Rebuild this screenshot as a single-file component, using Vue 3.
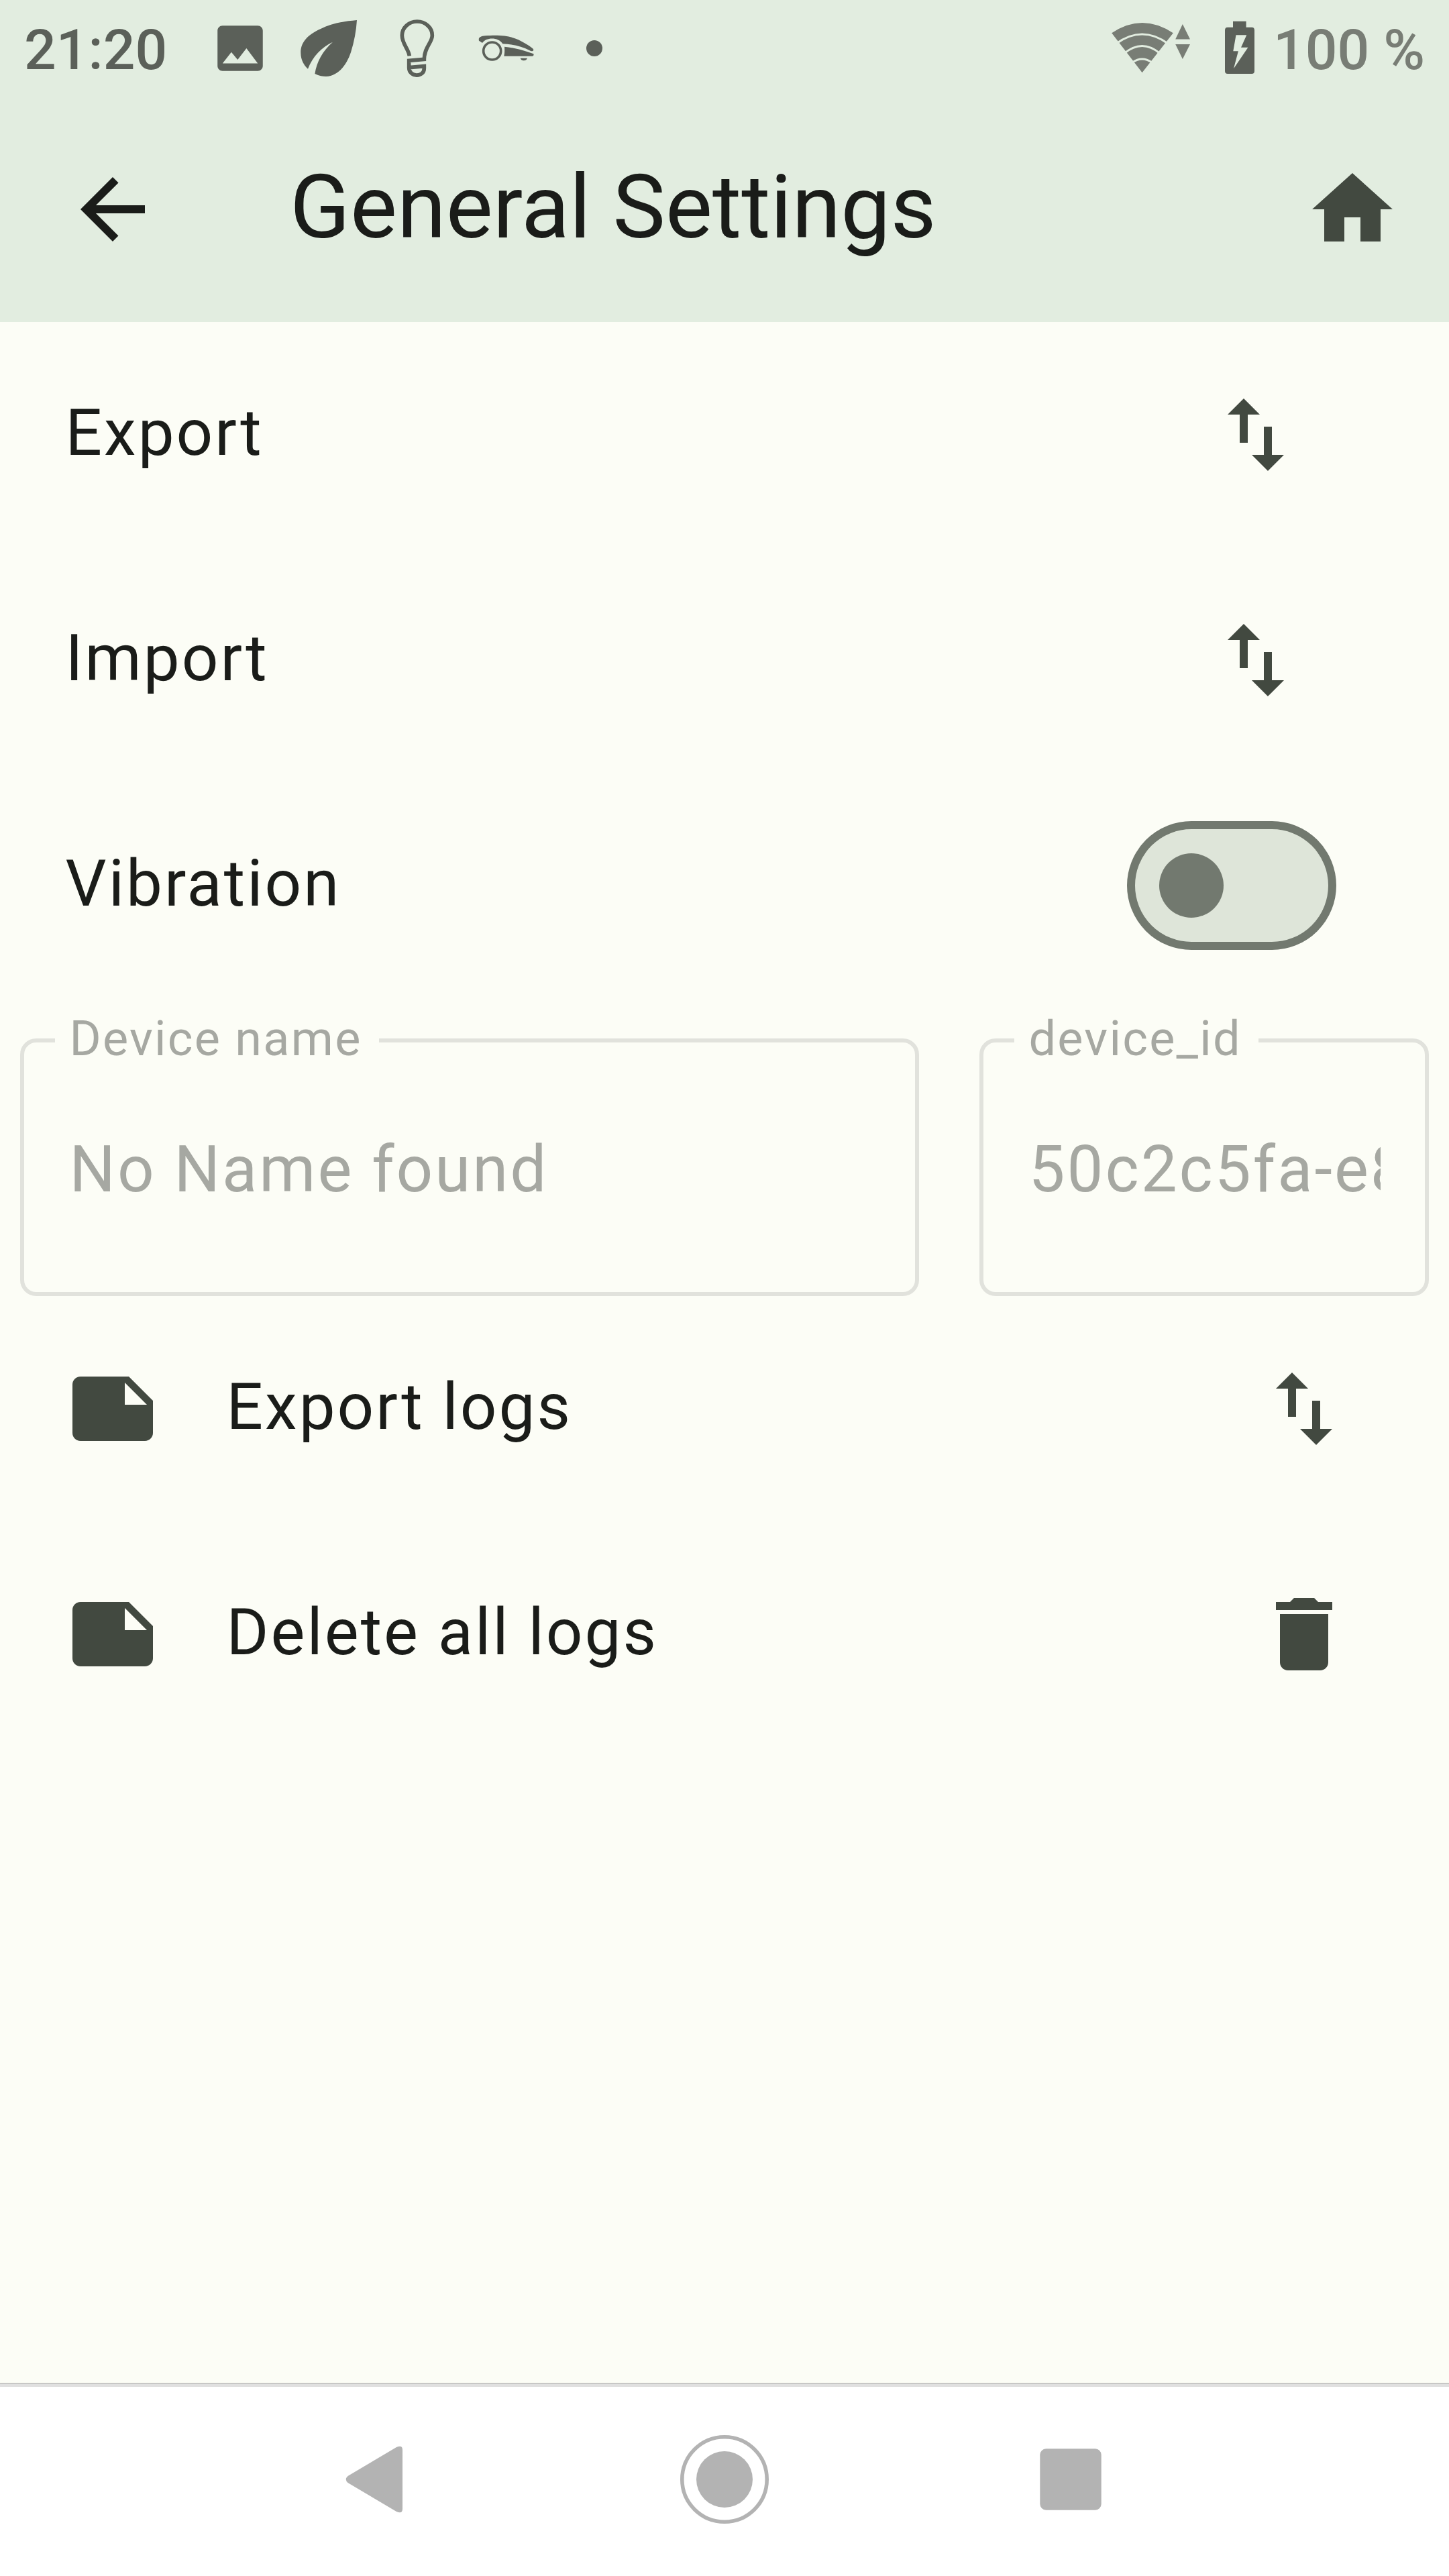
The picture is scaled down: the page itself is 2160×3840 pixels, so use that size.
<script setup>
const icons = {
  swap: 'M9 3L5 6.99h3V14h2V6.99h3L9 3zm7 14.01V10h-2v7.01h-3L15 21l4-3.99h-3z',
  note: 'M22 10l-6-6H4c-1.1 0-2 .9-2 2v12.01c0 1.1.9 1.99 2 1.99l16-.01c1.1 0 2-.89 2-1.99v-8zm-7-4.5l5.5 5.5H15V5.5z',
  trash: 'M6 19c0 1.1.9 2 2 2h8c1.1 0 2-.9 2-2V7H6v12zM19 4h-3.5l-1-1h-5l-1 1H5v2h14V4z',
}
const transfers = ['Export', 'Import']
const logs = [
  { title: 'Export logs', icon: icons.swap },
  { title: 'Delete all logs', icon: icons.trash },
]
const fields = [
  { label: 'Device name', value: 'No Name found', size: 'wide' },
  { label: 'device_id', value: '50c2c5fa-e8', size: 'narrow' },
]
</script>

<template>
  <div class="screen">
    <div class="status">
      <span class="clock">21:20</span>
      <svg class="s-image" viewBox="0 0 24 24"><path d="M21 19V5c0-1.1-.9-2-2-2H5c-1.1 0-2 .9-2 2v14c0 1.1.9 2 2 2h14c1.1 0 2-.9 2-2zM8.5 13.5l2.5 3.01L14.5 12l4.5 6H5l3.5-4.5z" /></svg>
      <svg class="s-leaf" viewBox="448 28 84 88"><path d="M532 30C510 32 494 35 478 43C456 53 448 65 448.3 79C448.5 90 453 97 459 102.7C466 84 480 70 496 62.7C481 76 472 92 469.4 110C476 113 481 114 486 114C505 113 517 96 523 78C528 62 531 46 532 30Z" /></svg>
      <svg class="s-bulb" viewBox="220 81 171 270"><path d="M272 250C268 218 239 196 239 158A67.5 62 0 0 1 374 158C374 190 338 212 338 265L270 271V303C270 346 338 348 338 305V296L272 302" /></svg>
      <svg class="s-vacuum" viewBox="576 150 255 132">
        <path d="M582 182C578 167 590 162 610 160C700 154 740 165 790 195C815 210 826 218 826 223C825 230 820 230 812 227C770 205 730 198 688 196C670 166 615 165 597 192Z" />
        <path d="M696 209C750 215 790 228 826 241C828 247 825 251 820 251H694C697 235 697 225 696 209ZM767 260H798C794 274 771 274 767 260Z" />
        <circle cx="641" cy="228" r="39" />
      </svg>
      <span class="s-dot"></span>
      <span class="spring"></span>
      <svg class="s-wifi" viewBox="36 28 120 88">
        <path d="M37.2 49.3Q82.6 18.7 128.8 49.3L82.6 108.3ZM142.9 36L154 58.5H132.2ZM132.2 66H154L142.9 88Z" />
        <path class="cut" d="M44 65Q82.6 37 121 65M56 79.5Q82.6 57.5 109 79.5M68 93Q82.6 83 97 93" />
      </svg>
      <svg class="s-battery" viewBox="206 28 44 88"><path fill-rule="evenodd" d="M218 31.8H237.6V40.7H246Q250 40.7 250 45V106Q250 110 246 110H210Q206 110 206 106V45Q206 40.7 210 40.7H218ZM222.5 52.3L218.3 76.3H225.9L219 102.3L240.4 70.7H230L238.3 52.3Z" /></svg>
      <span class="percent">100 %</span>
    </div>

    <header class="bar">
      <svg class="icon back" viewBox="0 0 24 24"><path d="M20 11H7.83l5.59-5.59L12 4l-8 8 8 8 1.41-1.41L7.83 13H20v-2z" /></svg>
      <h1>General Settings</h1>
      <svg class="icon" viewBox="0 0 24 24"><path d="M10 20v-6h4v6h5v-8h3L12 3 2 12h3v8z" /></svg>
    </header>

    <main>
      <div v-for="name in transfers" :key="name" class="row action">
        <span class="title">{{ name }}</span>
        <svg class="icon" viewBox="0 0 24 24"><path :d="icons.swap" /></svg>
      </div>
      <div class="row toggle">
        <span class="title">Vibration</span>
        <span class="switch"><span class="thumb"></span></span>
      </div>
      <div class="fields">
        <fieldset v-for="f in fields" :key="f.label" :class="f.size">
          <legend>{{ f.label }}</legend>
          <div class="value">{{ f.value }}</div>
        </fieldset>
      </div>
      <div v-for="log in logs" :key="log.title" class="row log">
        <svg class="icon" viewBox="0 0 24 24"><path :d="icons.note" /></svg>
        <span class="title">{{ log.title }}</span>
        <svg class="icon" viewBox="0 0 24 24"><path :d="log.icon" /></svg>
      </div>
    </main>

    <nav>
      <svg viewBox="0 0 144 144"><path d="M26.5 67L99 24Q108 20 108 28V116Q108 124 99 120L26.5 77Q21 72 26.5 67Z" /></svg>
      <svg viewBox="0 0 144 144"><circle class="ring" cx="72" cy="72" r="63.2" /><circle cx="72" cy="72" r="42" /></svg>
      <svg viewBox="0 0 144 144"><rect x="26.3" y="26.3" width="91.4" height="91.4" rx="9" /></svg>
    </nav>
  </div>
</template>

<style>
body { margin: 0; }
</style>

<style scoped>
.screen {
  width: 2160px;
  height: 3840px;
  display: flex;
  flex-direction: column;
  background: #fcfdf6;
  color: #1a1c19;
  font-family: Roboto, "Noto Sans", sans-serif;
  overflow: hidden;
}
svg { display: block; flex: none; }
.status {
  height: 144px;
  flex: none;
  box-sizing: border-box;
  padding: 0 36px;
  display: flex;
  align-items: center;
  background: #e2ede0;
  color: #5b6059;
  fill: #5b6059;
  font-size: 84px;
  font-weight: 500;
  line-height: 98px;
  white-space: pre;
}
.clock { width: 277px; padding-top: 6px; }
.s-image { width: 90px; height: 90px; }
.s-leaf { width: 84px; height: 88px; margin-left: 45px; }
.s-bulb { width: 57px; height: 90px; margin-left: 61px; fill: none; stroke: #5b6059; stroke-width: 17; }
.s-vacuum { width: 85px; height: 44px; margin-left: 62px; }
.s-vacuum circle { fill: none; stroke: #5b6059; stroke-width: 11; }
.s-dot { width: 24px; height: 24px; margin-left: 77px; border-radius: 50%; background: #5b6059; }
.spring { flex: 1; }
.s-wifi { width: 120px; height: 88px; margin-right: 50px; fill: #787d75; }
.s-wifi .cut { fill: none; stroke: #e2ede0; stroke-width: 3; }
.s-battery { width: 44px; height: 88px; }
.percent { color: #787d75; margin-left: 28px; padding-top: 6px; }

.bar {
  height: 336px;
  flex: none;
  box-sizing: border-box;
  padding: 0 72px 0 96px;
  display: flex;
  align-items: center;
  background: #e2ede0;
}
h1 {
  flex: 1;
  margin: 0 0 0 192px;
  padding-bottom: 6px;
  font-size: 132px;
  font-weight: 400;
  line-height: 168px;
}
.icon { width: 144px; height: 144px; fill: #424940; }
.back { fill: #1a1c19; }

main { flex: 1; }
.row {
  height: 336px;
  box-sizing: border-box;
  padding-left: 96px;
  display: flex;
  align-items: center;
}
.title {
  flex: 1;
  padding: 0 0 6px 1.5px;
  font-size: 96px;
  line-height: 144px;
  letter-spacing: 3px;
}
.action { padding-right: 216px; }
.toggle { padding-right: 168px; }
.log { padding-right: 144px; gap: 96px; }
.switch {
  width: 312px;
  height: 192px;
  box-sizing: border-box;
  padding-left: 36px;
  display: flex;
  align-items: center;
  border: 12px solid #72796f;
  border-radius: 96px;
  background: #dee5d9;
}
.thumb { width: 96px; height: 96px; border-radius: 50%; background: #72796f; }

.fields {
  height: 444px;
  box-sizing: border-box;
  padding: 25px 30px 0;
  display: flex;
  justify-content: space-between;
  color: #a6a8a2;
}
fieldset {
  height: 419px;
  min-width: 0;
  box-sizing: border-box;
  margin: 0;
  padding: 0 66px 0 46px;
  border: 6px solid #e1e2dc;
  border-radius: 24px;
}
.wide { width: 1340px; }
.narrow { width: 670px; }
legend {
  padding: 0 25.5px 4px 21.5px;
  font-size: 72px;
  line-height: 72px;
  letter-spacing: 2.25px;
}
.value {
  margin: 82px 0 0 20px;
  padding-left: 1.5px;
  font-size: 96px;
  line-height: 144px;
  letter-spacing: 3px;
  white-space: nowrap;
  overflow: hidden;
}

nav {
  height: 288px;
  flex: none;
  box-sizing: border-box;
  display: flex;
  align-items: center;
  justify-content: center;
  gap: 372px;
  background: #fff;
  box-shadow: inset 0 1px #a9a9a6, inset 0 6px #e0e0e0;
  fill: #b3b3b3;
}
nav svg { width: 144px; height: 144px; }
.ring { fill: none; stroke: #b3b3b3; stroke-width: 5.6; }
</style>
